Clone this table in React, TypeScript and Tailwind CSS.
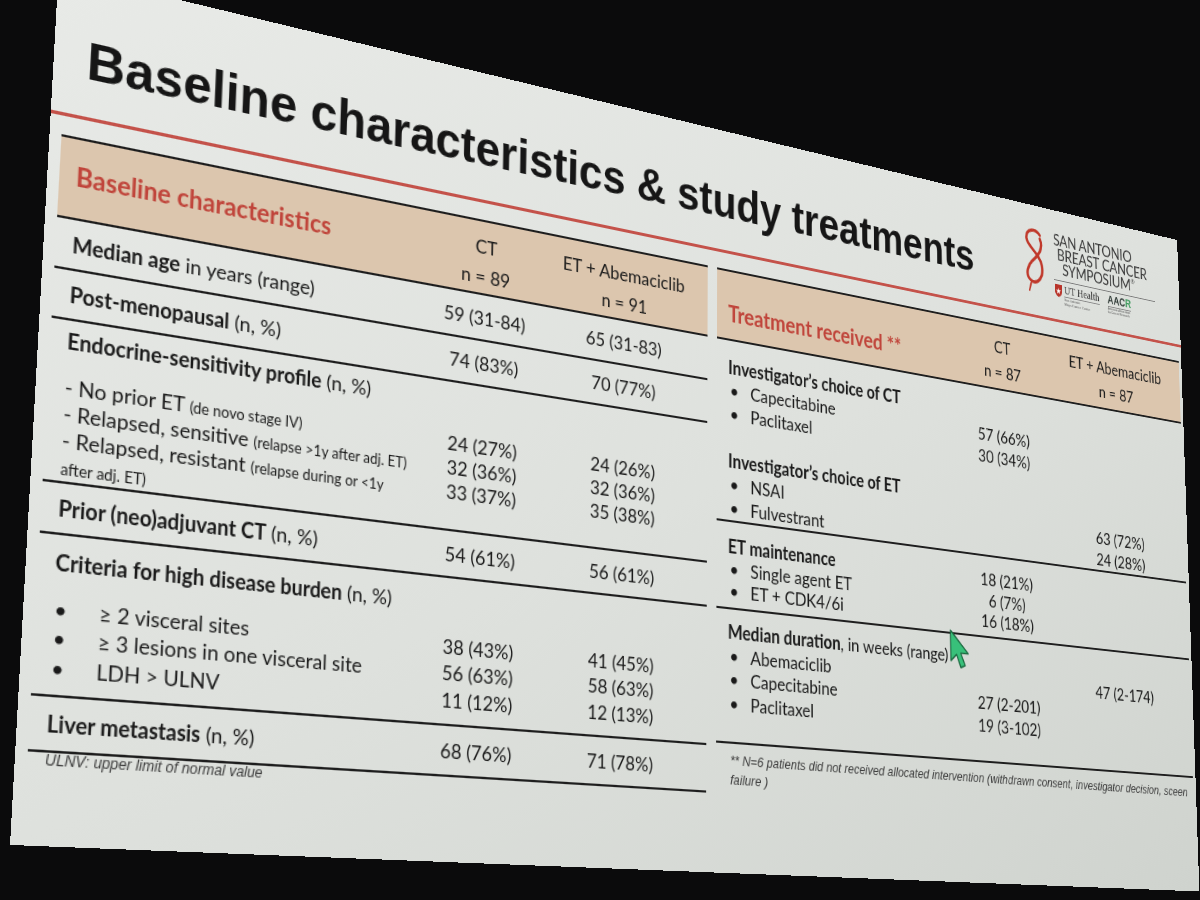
import React from "react";

type Pt = [number, number];

// logical slide size, before it is projected onto the photo
const SLIDE_W = 1280;
const SLIDE_H = 720;

// where the slide corners land in the 1200x900 photo
const CORNERS: { tl: Pt; tr: Pt; bl: Pt; br: Pt } = {
  tl: [58.6, -29.2],
  tr: [1177, 240],
  bl: [10, 845],
  br: [1199.3, 891.4],
};

// square-to-quad homography, written out as a css matrix3d
function projection(w: number, h: number, c: typeof CORNERS) {
  const [x0, y0] = c.tl;
  const [x1, y1] = c.tr;
  const [x2, y2] = c.bl;
  const [x3, y3] = c.br;
  const dx1 = x1 - x3;
  const dx2 = x2 - x3;
  const sx = x0 - x1 + x3 - x2;
  const dy1 = y1 - y3;
  const dy2 = y2 - y3;
  const sy = y0 - y1 + y3 - y2;
  const det = dx1 * dy2 - dx2 * dy1;
  const g = (sx * dy2 - dx2 * sy) / det;
  const k = (dx1 * sy - sx * dy1) / det;
  const a = x1 - x0 + g * x1;
  const b = x2 - x0 + k * x2;
  const d = y1 - y0 + g * y1;
  const e = y2 - y0 + k * y2;
  return `matrix3d(${a / w},${d / w},0,${g / w},${b / h},${e / h},0,${k / h},0,0,1,0,${x0},${y0},0,1)`;
}

const Small = ({ children }: { children: React.ReactNode }) => (
  <span className="text-[13px] leading-none">{children}</span>
);

const Blank = () => <div>&nbsp;</div>;

function LeftBullet({ children }: { children: React.ReactNode }) {
  return (
    <div className="flex">
      <span className="w-[38px] pl-[1px]">•</span>
      <span>{children}</span>
    </div>
  );
}

function RightBullet({ children }: { children: React.ReactNode }) {
  return (
    <div className="flex">
      <span className="w-[26px] pl-[2px]">•</span>
      <span>{children}</span>
    </div>
  );
}

function LeftTable() {
  return (
    <div className="w-[639px] shrink-0">
      <div className="border-t-2 border-[#1e1e1e]">
        <div className="grid h-[69px] grid-cols-[331px_132px_1fr] border-b-2 border-[#1e1e1e] bg-[#dcc6ae]">
          <div className="pl-[14px] pt-[18px] text-[22px] font-bold leading-[28px] text-[#c0453b]">
            Baseline characteristics
          </div>
          <div className="pt-[9px] text-center leading-[28px]">
            CT
            <br />n = 89
          </div>
          <div className="pr-[12px] pt-[9px] text-center leading-[28px]">
            ET + Abemaciclib
            <br />n = 91
          </div>
        </div>

        <div className="grid h-[43px] grid-cols-[331px_132px_1fr] items-center border-b-2 border-[#1e1e1e] leading-[24px]">
          <div className="whitespace-nowrap pl-[14px]">
            <span className="font-bold">Median age</span> in years (range)
          </div>
          <div className="text-center">59 (31-84)</div>
          <div className="pr-[12px] text-center">65 (31-83)</div>
        </div>

        <div className="grid h-[42px] grid-cols-[331px_132px_1fr] items-center border-b-2 border-[#1e1e1e] leading-[24px]">
          <div className="whitespace-nowrap pl-[14px]">
            <span className="font-bold">Post-menopausal</span> (n, %)
          </div>
          <div className="text-center">74 (83%)</div>
          <div className="pr-[12px] text-center">70 (77%)</div>
        </div>

        <div className="grid h-[135px] grid-cols-[331px_132px_1fr] border-b-2 border-[#1e1e1e] pt-[5px]">
          <div className="whitespace-nowrap pl-[14px]">
            <div className="leading-[24px]">
              <span className="font-bold">Endocrine-sensitivity profile</span> (n, %)
            </div>
            <div className="mt-[15px] leading-[22px]">
              <div>
                - No prior ET <Small>(de novo stage IV)</Small>
              </div>
              <div>
                - Relapsed, sensitive <Small>(relapse &gt;1y after adj. ET)</Small>
              </div>
              <div>
                - Relapsed, resistant <Small>(relapse during or &lt;1y</Small>
              </div>
              <div>
                <Small>after adj. ET)</Small>
              </div>
            </div>
          </div>
          <div className="text-center">
            <div className="h-[24px]" />
            <div className="mt-[15px] leading-[22px]">
              <div>24 (27%)</div>
              <div>32 (36%)</div>
              <div>33 (37%)</div>
            </div>
          </div>
          <div className="pr-[12px] text-center">
            <div className="h-[24px]" />
            <div className="mt-[15px] leading-[22px]">
              <div>24 (26%)</div>
              <div>32 (36%)</div>
              <div>35 (38%)</div>
            </div>
          </div>
        </div>

        <div className="grid h-[42px] grid-cols-[331px_132px_1fr] items-center border-b-2 border-[#1e1e1e] leading-[24px]">
          <div className="whitespace-nowrap pl-[14px]">
            <span className="font-bold">Prior (neo)adjuvant CT</span> (n, %)
          </div>
          <div className="text-center">54 (61%)</div>
          <div className="pr-[12px] text-center">56 (61%)</div>
        </div>

        <div className="grid h-[130px] grid-cols-[331px_132px_1fr] border-b-2 border-[#1e1e1e] pt-[10px]">
          <div className="whitespace-nowrap pl-[14px]">
            <div className="leading-[24px]">
              <span className="font-bold">Criteria for high disease burden</span> (n, %)
            </div>
            <div className="mt-[15px] leading-[23.3px]">
              <LeftBullet>≥ 2 visceral sites</LeftBullet>
              <LeftBullet>≥ 3 lesions in one visceral site</LeftBullet>
              <LeftBullet>LDH &gt; ULNV</LeftBullet>
            </div>
          </div>
          <div className="text-center">
            <div className="h-[24px]" />
            <div className="mt-[15px] leading-[23.3px]">
              <div>38 (43%)</div>
              <div>56 (63%)</div>
              <div>11 (12%)</div>
            </div>
          </div>
          <div className="pr-[12px] text-center">
            <div className="h-[24px]" />
            <div className="mt-[15px] leading-[23.3px]">
              <div>41 (45%)</div>
              <div>58 (63%)</div>
              <div>12 (13%)</div>
            </div>
          </div>
        </div>

        <div className="grid h-[44px] grid-cols-[331px_132px_1fr] items-center border-b-2 border-[#1e1e1e] leading-[24px]">
          <div className="whitespace-nowrap pl-[14px]">
            <span className="font-bold">Liver metastasis</span> (n, %)
          </div>
          <div className="text-center">68 (76%)</div>
          <div className="pr-[12px] text-center">71 (78%)</div>
        </div>
      </div>
      <div className="-mt-[1px] pl-[14px] font-['Liberation_Sans',Arial,sans-serif] text-[12.3px] italic leading-[14px] text-[#3c3c3c]">
        ULNV: upper limit of normal value
      </div>
    </div>
  );
}

function RightTable() {
  return (
    <div className="w-[616px] shrink-0">
      <div className="border-t-2 border-[#1e1e1e]">
        <div className="grid h-[69px] grid-cols-[295px_130px_1fr] border-b-2 border-[#1e1e1e] bg-[#dcc6ae]">
          <div className="whitespace-nowrap pl-[13px] pt-[28px] text-[22px] font-bold leading-[28px] text-[#c0453b]">
            Treatment received **
          </div>
          <div className="pt-[9px] text-center leading-[27px]">
            CT
            <br />n = 87
          </div>
          <div className="pt-[9px] text-center leading-[27px]">
            ET + Abemaciclib
            <br />n = 87
          </div>
        </div>

        <div className="grid h-[178px] grid-cols-[295px_130px_1fr] border-b-2 border-[#1e1e1e] pt-[15px] leading-[23px]">
          <div className="whitespace-nowrap pl-[13px]">
            <div className="font-bold">Investigator’s choice of CT</div>
            <RightBullet>Capecitabine</RightBullet>
            <RightBullet>Paclitaxel</RightBullet>
            <Blank />
            <div className="font-bold">Investigator’s choice of ET</div>
            <RightBullet>NSAI</RightBullet>
            <RightBullet>Fulvestrant</RightBullet>
          </div>
          <div className="text-center">
            <Blank />
            <div>57 (66%)</div>
            <div>30 (34%)</div>
          </div>
          <div className="text-center">
            <Blank />
            <Blank />
            <Blank />
            <Blank />
            <Blank />
            <div>63 (72%)</div>
            <div>24 (28%)</div>
          </div>
        </div>

        <div className="grid h-[84px] grid-cols-[295px_130px_1fr] border-b-2 border-[#1e1e1e] pt-[13px] leading-[21.5px]">
          <div className="whitespace-nowrap pl-[13px]">
            <div className="font-bold">ET maintenance</div>
            <RightBullet>Single agent ET</RightBullet>
            <RightBullet>ET + CDK4/6i</RightBullet>
          </div>
          <div className="text-center">
            <div>18 (21%)</div>
            <div>6 (7%)</div>
            <div>16 (18%)</div>
          </div>
          <div />
        </div>

        <div className="grid h-[127px] grid-cols-[295px_130px_1fr] border-b-2 border-[#1e1e1e] pt-[10px] leading-[22.5px]">
          <div className="whitespace-nowrap pl-[13px]">
            <div>
              <span className="font-bold">Median duration</span>, in weeks (range)
            </div>
            <RightBullet>Abemaciclib</RightBullet>
            <RightBullet>Capecitabine</RightBullet>
            <RightBullet>Paclitaxel</RightBullet>
          </div>
          <div className="text-center">
            <Blank />
            <Blank />
            <div>27 (2-201)</div>
            <div>19 (3-102)</div>
          </div>
          <div className="text-center">
            <Blank />
            <div>47 (2-174)</div>
          </div>
        </div>
      </div>
      <div className="mt-[7px] whitespace-nowrap pl-[16px] font-['Liberation_Sans',Arial,sans-serif] text-[13px] italic leading-[18px] text-[#3c3c3c]">
        ** N=6 patients did not received allocated intervention (withdrawn consent, investigator decision, sceen
        <br />
        failure )
      </div>
    </div>
  );
}

function Logo() {
  return (
    <div className="mr-[38px] mt-[25px] flex w-[194px] shrink-0">
      <svg viewBox="0 0 40 72" className="h-[72px] w-[40px] shrink-0">
        <path
          d="M28 7 C22 0 8 2 9 13 C10 22 27 27 30 40 C33 53 23 63 15 59 C6 55 9 43 20 34 C28 27 32 19 28 11"
          fill="none"
          stroke="#c0392b"
          strokeWidth="3.4"
          strokeLinecap="round"
        />
        <path d="M15 60 L12 70" stroke="#c0392b" strokeWidth="2.2" strokeLinecap="round" />
      </svg>
      <div className="ml-[7px] flex flex-col text-[#3a3a3a]">
        <div className="text-[17px] leading-[16px] tracking-[-0.01em]">
          <div>SAN ANTONIO</div>
          <div className="pl-[5px]">BREAST CANCER</div>
          <div className="pl-[12px]">
            SYMPOSIUM<span className="align-top text-[7px] leading-none">®</span>
          </div>
        </div>
        <div className="mt-[4px] h-px w-[148px] bg-[#7a7a7a]" />
        <div className="mt-[3px] flex items-start gap-[12px]">
          <div className="flex items-start gap-[2px]">
            <svg viewBox="0 0 12 16" className="h-[16px] w-[12px] shrink-0">
              <path d="M1 1 H11 V9 C11 12 8 14 6 15 C4 14 1 12 1 9 Z" fill="#b8342a" />
              <path d="M6 4.5 L6.9 7.2 L9.6 7.2 L7.4 8.8 L8.2 11.4 L6 9.8 L3.8 11.4 L4.6 8.8 L2.4 7.2 L5.1 7.2 Z" fill="#ffffff" />
            </svg>
            <div className="font-['Liberation_Serif',serif] text-[12px] leading-[12px] text-[#333]">
              UT Health
              <div className="mt-[1px] border-t border-[#888] text-[4.5px] leading-[5px] text-[#555]">
                San Antonio
                <br />
                Mays Cancer Center
              </div>
            </div>
          </div>
          <div className="font-['Liberation_Sans',Arial,sans-serif]">
            <div className="text-[12px] font-bold leading-[12px] text-[#2f3a36]">
              AAC<span className="text-[#3d9a5c]">R</span>
            </div>
            <div className="mt-[1px] border-t border-[#888] text-[3.5px] leading-[4px] text-[#555]">
              American Association
              <br />
              for Cancer Research
            </div>
          </div>
        </div>
      </div>
    </div>
  );
}

function Cursor() {
  return (
    <svg viewBox="0 0 22 34" className="absolute left-[943px] top-[468px] h-[42px] w-[27px]">
      <path
        d="M1 1 L1 26 L7 20.5 L11.5 31 L16 29 L11.5 19 L19.5 19 Z"
        fill="#38c07a"
        stroke="#1d6b42"
        strokeWidth="1.3"
        strokeLinejoin="round"
      />
    </svg>
  );
}

export default function App() {
  const transform = projection(SLIDE_W, SLIDE_H, CORNERS);

  return (
    <div className="h-[900px] w-[1200px] overflow-hidden bg-[#0b0b0c]">
      <div
        className="relative h-[720px] w-[1280px] origin-top-left overflow-hidden bg-linear-to-br from-[#e8eae7] via-[#dee1dd] to-[#cfd3ce] font-['Lato','Open_Sans',sans-serif] text-[18px] text-[#1a1a1a]"
        style={{ transform }}
      >
        <div className="flex h-[121px] items-start">
          <div className="ml-[28px] mt-[49px] whitespace-nowrap font-['Liberation_Sans',Arial,sans-serif] text-[46px] font-bold leading-[46px] text-[#161616]">
            Baseline characteristics &amp; study treatments
          </div>
          <div className="ml-auto">
            <Logo />
          </div>
        </div>
        <div className="h-[3px] bg-[#c4524a]" />
        <div className="mt-[16px] flex gap-[11px] pl-[10px]">
          <LeftTable />
          <RightTable />
        </div>
        <Cursor />
      </div>
    </div>
  );
}
